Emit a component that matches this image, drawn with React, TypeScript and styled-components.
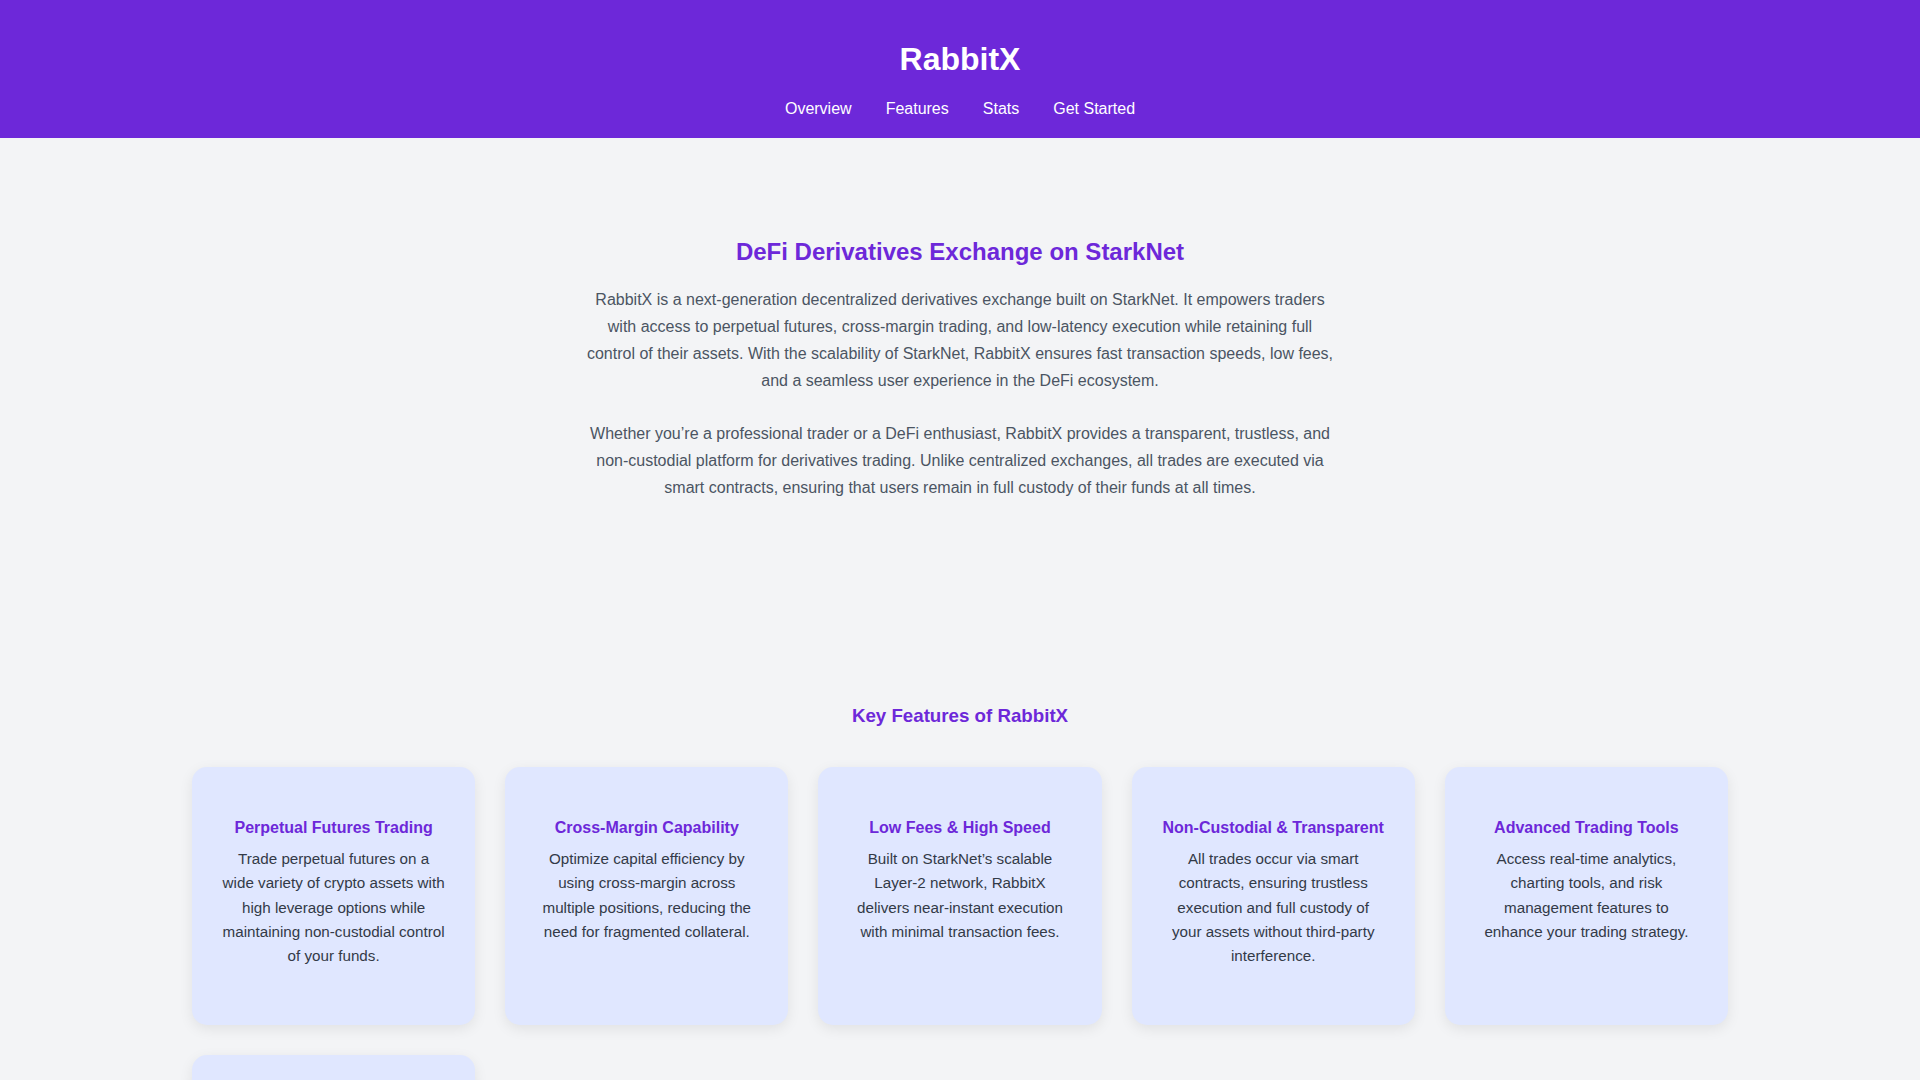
import * as React from 'react'
import styled, { createGlobalStyle } from 'styled-components'

const GlobalStyle = createGlobalStyle`
  * {
    box-sizing: border-box;
  }

  body {
    margin: 0;
    background: #f3f4f6;
    color: #374151;
    font-family: 'Liberation Sans', Arial, sans-serif;
  }
`

const Header = styled.header`
  display: flex;
  flex-direction: column;
  align-items: center;
  gap: 22px;
  padding: 41px 0 20px;
  background: #6d28d9;
  color: #fff;
`

const Logo = styled.h1`
  margin: 0;
  font-size: 32px;
  line-height: 1.15;
  font-weight: bold;
`

const Nav = styled.nav`
  display: flex;
  gap: 34px;
`

const NavLink = styled.a`
  color: #fff;
  font-size: 16px;
  line-height: 1.15;
  text-decoration: none;
  cursor: pointer;
`

const Hero = styled.section`
  display: flex;
  flex-direction: column;
  align-items: center;
  padding: 100px 20px 0;
  text-align: center;
`

const HeroTitle = styled.h2`
  margin: 0 0 20px;
  color: #6d28d9;
  font-size: 24px;
  line-height: 1.15;
`

const HeroText = styled.p`
  max-width: 755px;
  margin: 0 0 25px;
  color: #4b5563;
  font-size: 16px;
  line-height: 1.7;

  &:last-child {
    margin-bottom: 0;
  }
`

const Features = styled.section`
  width: 80%;
  margin: 0 auto;
  padding-top: 204px;
  text-align: center;
`

const SectionTitle = styled.h2`
  margin: 0 0 40px;
  color: #6d28d9;
  font-size: 18.72px;
  line-height: 1.15;
`

const Grid = styled.div`
  display: grid;
  grid-template-columns: repeat(auto-fit, minmax(250px, 1fr));
  gap: 30px;
`

const Card = styled.div`
  padding: 32px 29px;
  border-radius: 15px;
  background: #e0e7ff;
  box-shadow: 0 4px 14px rgba(0, 0, 0, 0.08);
`

const CardTitle = styled.h3`
  margin: 20px 0 10px;
  color: #6d28d9;
  font-size: 16px;
  line-height: 1.15;
`

const CardText = styled.p`
  margin: 0 0 24px;
  color: #333a47;
  font-size: 0.95rem;
  line-height: 1.6;
`

const features = [
  {
    title: 'Perpetual Futures Trading',
    text: 'Trade perpetual futures on a wide variety of crypto assets with high leverage options while maintaining non-custodial control of your funds.',
  },
  {
    title: 'Cross-Margin Capability',
    text: 'Optimize capital efficiency by using cross-margin across multiple positions, reducing the need for fragmented collateral.',
  },
  {
    title: 'Low Fees & High Speed',
    text: 'Built on StarkNet’s scalable Layer-2 network, RabbitX delivers near-instant execution with minimal transaction fees.',
  },
  {
    title: 'Non-Custodial & Transparent',
    text: 'All trades occur via smart contracts, ensuring trustless execution and full custody of your assets without third-party interference.',
  },
  {
    title: 'Advanced Trading Tools',
    text: 'Access real-time analytics, charting tools, and risk management features to enhance your trading strategy.',
  },
  {
    title: 'Community Rewards',
    text: 'Earn incentives for trading and providing liquidity while helping shape the future of the protocol.',
  },
]

export default function App(): JSX.Element {
  return (
    <>
      <GlobalStyle />
      <Header>
        <Logo>RabbitX</Logo>
        <Nav>
          <NavLink href="#overview">Overview</NavLink>
          <NavLink href="#features">Features</NavLink>
          <NavLink href="#stats">Stats</NavLink>
          <NavLink href="#get-started">Get Started</NavLink>
        </Nav>
      </Header>

      <Hero id="overview">
        <HeroTitle>DeFi Derivatives Exchange on StarkNet</HeroTitle>
        <HeroText>
          RabbitX is a next-generation decentralized derivatives exchange built on StarkNet. It
          empowers traders with access to perpetual futures, cross-margin trading, and low-latency
          execution while retaining full control of their assets. With the scalability of StarkNet,
          RabbitX ensures fast transaction speeds, low fees, and a seamless user experience in the
          DeFi ecosystem.
        </HeroText>
        <HeroText>
          Whether you’re a professional trader or a DeFi enthusiast, RabbitX provides a
          transparent, trustless, and non-custodial platform for derivatives trading. Unlike
          centralized exchanges, all trades are executed via smart contracts, ensuring that users
          remain in full custody of their funds at all times.
        </HeroText>
      </Hero>

      <Features id="features">
        <SectionTitle>Key Features of RabbitX</SectionTitle>
        <Grid>
          {features.map((f) => (
            <Card key={f.title}>
              <CardTitle>{f.title}</CardTitle>
              <CardText>{f.text}</CardText>
            </Card>
          ))}
        </Grid>
      </Features>
    </>
  )
}
